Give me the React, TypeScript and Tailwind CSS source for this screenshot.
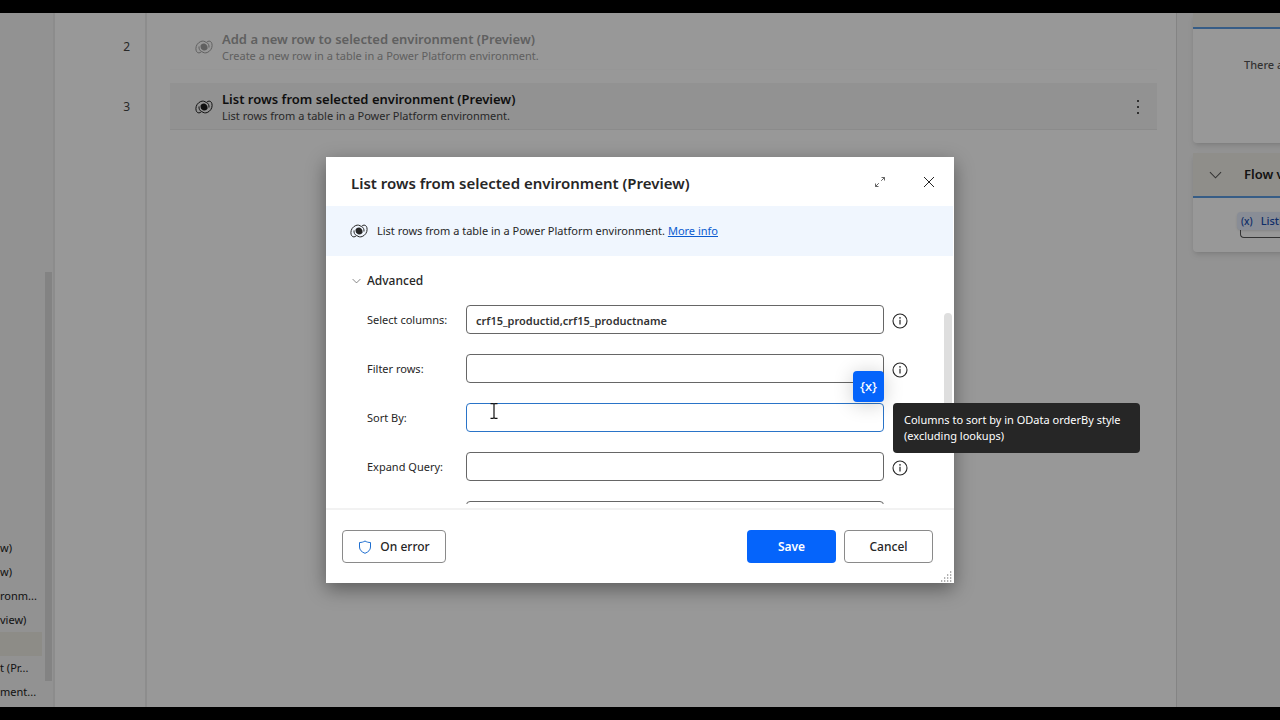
import type { ReactNode } from "react";

function DataverseIcon({ className = "" }: { className?: string }) {
  return (
    <svg viewBox="0 0 18 14" className={"h-3.5 w-[18px] shrink-0 " + className} fill="none" stroke="currentColor" strokeLinecap="round" aria-hidden="true">
      <path d="M11 2.300C9.600 1 7.600.8 5.800 1.500 2.800 2.700.9 5.500.9 8.600c0 2.600 1.200 4.300 3 4.300 1.100 0 2-.5 2.600-1.300C4.600 10.600 3.700 8.700 4 6.800" strokeWidth="1" />
      <path d="M7 11.700c1.400 1.300 3.400 1.500 5.200.8 3-1.200 4.900-4 4.900-7.100 0-2.600-1.200-4.300-3-4.300-1.100 0-2 .5-2.600 1.300 1.900 1 2.800 2.900 2.500 4.800" strokeWidth="1" />
      <path d="M5.600 5.400C6.400 3.700 8.300 3 10 3.700c1.800.8 2.900 2.700 2.500 4.600-.7 1.900-2.600 2.700-4.400 2C6.300 9.500 5.200 7.400 5.600 5.400z" fill="currentColor" stroke="none" />
    </svg>
  );
}

function ChevronDown({ className }: { className: string }) {
  return (
    <svg viewBox="0 0 14 8" className={className} fill="none" stroke="currentColor" strokeWidth="1.1" aria-hidden="true">
      <path d="M1 1l6 6 6-6" />
    </svg>
  );
}

function InfoIcon() {
  return (
    <svg viewBox="0 0 16 16" className="size-4" fill="none" stroke="currentColor" aria-hidden="true">
      <circle cx="8" cy="8" r="7" strokeWidth="1.1" />
      <path d="M8 6.800v4.700" strokeWidth="1.200" />
      <circle cx="8" cy="4.900" r=".8" fill="currentColor" stroke="none" />
    </svg>
  );
}

const actions = ["w)", "w)", "ronm...", "view)", "", "t (Pr...", "ment..."];

function Sidebar() {
  return (
    <aside className="flex w-[55px] shrink-0 overflow-hidden border-r-2 border-[#eaeaea] bg-[#f3f3f3]">
      <ul className="flex w-[42px] shrink-0 flex-col justify-end overflow-hidden whitespace-nowrap pb-[3px] text-[11px] leading-6 text-[#222]">
        {actions.map((name, i) => (
          <li key={i} className={name ? "h-6" : "h-6 bg-[#ece9e2]"}>{name}</li>
        ))}
      </ul>
      <div className="ml-[3px] flex w-[7px] flex-col justify-end pb-[26px]">
        <div className="h-[409px] bg-[#dadada]" />
      </div>
    </aside>
  );
}

function Step({ title, detail, selected }: { title: string; detail: string; selected?: boolean }) {
  return (
    <div
      className={
        "flex h-[47px] items-center border-b pl-[25px] pr-[15px] pt-px " +
        (selected ? "border-[#e8e8e8] bg-[#f3f3f3] text-[#1a1a1a]" : "border-[#fafafa] text-[#a0a0a0]")
      }
    >
      <DataverseIcon />
      <div className="ml-[9px] flex-1">
        <h2 className="text-[13px] font-semibold leading-[18px]">{title}</h2>
        <p className={"text-[11px] leading-4 " + (selected ? "text-[#444]" : "")}>{detail}</p>
      </div>
      {selected && (
        <button type="button" aria-label="More actions" className="flex w-2 justify-center">
          <svg viewBox="0 0 4 16" className="h-4 w-1" fill="currentColor">
            <circle cx="2" cy="2" r="1" />
            <circle cx="2" cy="8" r="1" />
            <circle cx="2" cy="14" r="1" />
          </svg>
        </button>
      )}
    </div>
  );
}

function Workspace() {
  return (
    <>
      <ol className="flex w-[92px] shrink-0 flex-col gap-[13px] border-r-2 border-[#ececec] bg-[#fefefe] pr-[15px] pt-2.5 text-right text-xs leading-[47px] text-[#444]">
        <li>2</li>
        <li>3</li>
      </ol>
      <section className="flex min-w-0 flex-1 flex-col gap-[13px] bg-[#fefefe] pl-[23px] pr-[19px] pt-2.5">
        <Step title="Add a new row to selected environment (Preview)" detail="Create a new row in a table in a Power Platform environment." />
        <Step title="List rows from selected environment (Preview)" detail="List rows from a table in a Power Platform environment." selected />
      </section>
    </>
  );
}

function VariablesPane() {
  return (
    <aside className="flex w-[104px] shrink-0 flex-col gap-2.5 overflow-hidden whitespace-nowrap border-l border-[#dcdcdc] bg-[#f5f5f5] pl-4">
      <section className="w-60 rounded-b bg-[#fefefe] shadow-md">
        <div className="h-3.5 bg-[#efede6]" />
        <p className="h-[116px] border-t-2 border-[#5d9be0] pl-[51px] pt-[26px] text-[11px] font-medium leading-5 text-[#555]">There are</p>
      </section>
      <section className="w-60 rounded-b bg-[#fefefe] shadow-md">
        <h2 className="flex h-[43px] items-center bg-[#efede6] pl-4 text-[13px] font-semibold text-[#222]">
          <ChevronDown className="mr-[22px] h-2 w-[13px] text-[#555]" />
          Flow variables
        </h2>
        <div className="h-14 border-t-2 border-[#5d9be0] pl-11 pt-3.5">
          <div className="flex h-[18px] items-center gap-2 rounded bg-[#e4ecfa] pl-1 text-[11px] font-medium text-[#1a4bb0] shadow-sm">
            <span className="text-[10px]">(x)</span>
            ListRows
          </div>
          <div className="ml-[3px] h-2 rounded-bl-sm border-b border-l border-[#555]" />
        </div>
      </section>
    </aside>
  );
}

function Field({ id, label, value, focused, info, children }: { id: string; label: string; value?: string; focused?: boolean; info?: boolean; children?: ReactNode }) {
  return (
    <div className="flex h-[29px] shrink-0 items-center">
      <label htmlFor={id} className="w-[99px] shrink-0 pt-0.5 text-[11px]">{label}</label>
      <div className="relative min-w-0 flex-1">
        <input
          id={id}
          type="text"
          defaultValue={value}
          className={"block h-[29px] w-full rounded-sm border bg-white px-[9px] pt-px text-[11px] font-semibold text-[#333] outline-none " + (focused ? "border-[#2a74c8]" : "border-[#666]")}
        />
        {children}
      </div>
      <div className="ml-2 flex w-4 items-center pt-0.5">
        {info && (
          <button type="button" aria-label={"About " + label}>
            <InfoIcon />
          </button>
        )}
      </div>
    </div>
  );
}

function Dialog() {
  return (
    <div role="dialog" aria-labelledby="dialog-title" className="relative w-full max-w-[628px] bg-white text-[#262626] shadow-[0_6px_18px_rgba(0,0,0,0.4)]">
      <header className="flex h-[49px] items-center pl-[25px] pr-[19px]">
        <h1 id="dialog-title" className="flex-1 pt-1 text-[15px] font-semibold">List rows from selected environment (Preview)</h1>
        <button type="button" aria-label="Expand" className="mr-[37px]">
          <svg viewBox="0 0 12 12" className="size-3" fill="none" stroke="#555">
            <path d="M7.500 1.500h3v3M10.500 1.500L7.200 4.800M4.500 10.500h-3v-3M1.500 10.500l3.300-3.300" strokeWidth=".9" />
          </svg>
        </button>
        <button type="button" aria-label="Close">
          <svg viewBox="0 0 12 12" className="size-3" fill="none" stroke="currentColor" strokeWidth="1">
            <path d="M1 1l10 10M11 1L1 11" />
          </svg>
        </button>
      </header>
      <div className="mr-px flex h-[50px] items-center bg-[#f0f6fe] pl-6">
        <DataverseIcon />
        <p className="ml-[9px] text-[11px]">
          List rows from a table in a Power Platform environment.{" "}
          <a href="#more" className="text-[#0b5cd0] underline">More info</a>
        </p>
      </div>
      <div className="flex h-[248px] overflow-hidden pl-[26px]">
        <div className="flex min-w-0 flex-1 flex-col">
          <button type="button" className="flex h-[49px] shrink-0 items-center text-xs font-medium">
            <ChevronDown className="mr-[6px] h-[6px] w-[9px] text-[#555]" />
            Advanced
          </button>
          <form className="flex flex-col gap-5 pl-[15px]">
            <Field id="columns" label="Select columns:" value="crf15_productid,crf15_productname" info />
            <Field id="filter" label="Filter rows:" info />
            <Field id="sort" label="Sort By:" focused>
              <button type="button" aria-label="Insert variable" className="absolute bottom-full right-0 z-10 mb-px size-[31px] rounded-sm bg-[#0564fb] text-[13px] font-medium text-white shadow-[0_2px_20px_rgba(0,0,0,0.2)]">
                {"{x}"}
              </button>
              <svg viewBox="0 0 8 16" className="absolute left-6 top-0 h-4 w-2" fill="none" stroke="#111" strokeWidth="1.200" aria-hidden="true">
                <path d="M.5.700h2.500L4 1.200l1-.5h2.500M4 1v14M.5 15.300h2.500l1-.5 1 .5h2.500" />
              </svg>
            </Field>
            <Field id="expand" label="Expand Query:" info />
            <Field id="next" label="" />
          </form>
        </div>
        <div className="ml-9 mr-[2px] w-2 shrink-0 pt-[57px]">
          <div className="h-[124px] rounded-full bg-[#dedede]" />
        </div>
      </div>
      <footer className="mt-1 flex h-[75px] items-center gap-2 border-t-2 border-[#f2f2f2] pl-4 pr-[21px] text-xs font-medium">
        <button type="button" className="mr-auto flex h-[33px] w-[104px] items-center justify-center gap-2 rounded-sm border border-[#8a8a8a]">
          <svg viewBox="0 0 14 14" className="size-3.5" fill="none" stroke="#1f6fd0" strokeWidth="1" aria-hidden="true">
            <path d="M7 1c1.600 1 3.400 1.500 5.500 1.500V7c0 3-2.200 5-5.500 6.300C3.700 12 1.500 10 1.500 7V2.500C3.600 2.500 5.400 2 7 1z" />
          </svg>
          On error
        </button>
        <button type="button" className="h-[33px] w-[89px] rounded-sm bg-[#0564fb] font-semibold text-white">Save</button>
        <button type="button" className="h-[33px] w-[89px] rounded-sm border border-[#8a8a8a]">Cancel</button>
      </footer>
      <svg viewBox="0 0 12 12" className="absolute bottom-px right-px size-3" stroke="#999" strokeWidth="1.300" strokeDasharray="1.300 1.700" aria-hidden="true">
        <path d="M0 11h12M3 8h9M6 5h6M9 2h3" />
      </svg>
      <div role="tooltip" className="absolute left-[567px] top-[246px] w-[247px] rounded-sm bg-[#262626] px-[11px] py-[9px] text-[11px] leading-4 text-white">
        Columns to sort by in OData orderBy style (excluding lookups)
      </div>
    </div>
  );
}

export default function App() {
  return (
    <div className="flex h-screen flex-col overflow-hidden bg-black py-[13px] font-['Noto_Sans','Open_Sans',sans-serif]">
      <main className="relative flex min-h-0 flex-1 overflow-hidden">
        <Sidebar />
        <Workspace />
        <VariablesPane />
        <div className="absolute inset-0 z-20 flex items-start justify-center bg-black/40 pt-36">
          <Dialog />
        </div>
      </main>
    </div>
  );
}
